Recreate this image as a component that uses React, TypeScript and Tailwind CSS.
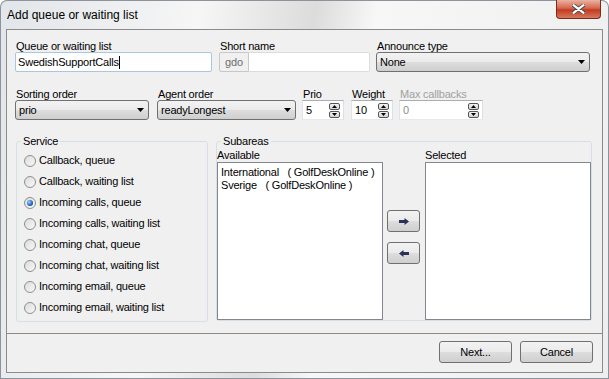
import React from "react";

const btnBg =
  "bg-[linear-gradient(#f2f2f2,#ebebeb_48%,#dddddd_52%,#cfcfcf)] border border-[#707070] rounded-[3px]";

const services = [
  "Callback, queue",
  "Callback, waiting list",
  "Incoming calls, queue",
  "Incoming calls, waiting list",
  "Incoming chat, queue",
  "Incoming chat, waiting list",
  "Incoming email, queue",
  "Incoming email, waiting list",
];

function Label({ children, muted }: { children: React.ReactNode; muted?: boolean }) {
  return (
    <div className={`h-[12px] leading-[12px] pl-[1px] whitespace-nowrap ${muted ? "text-[#a0a0a0]" : "text-black"}`}>
      {children}
    </div>
  );
}

function Combo({ value }: { value: string }) {
  return (
    <div className={`h-[20px] flex items-center pl-[3px] pr-[4px] ${btnBg}`}>
      <span className="flex-1">{value}</span>
      <svg width="7" height="4" viewBox="0 0 7 4">
        <path d="M0 0h7L3.5 4z" fill="#000" />
      </svg>
    </div>
  );
}

function SpinBtn({ up }: { up?: boolean }) {
  return (
    <div className="w-[11px] h-[7px] flex items-center justify-center rounded-[2px] border border-[#555] bg-[linear-gradient(#f4f4f4,#d4d4d4)]">
      <svg width="5" height="3" viewBox="0 0 5 3">
        <path d={up ? "M0 3h5L2.5 0z" : "M0 0h5L2.5 3z"} fill="#000" />
      </svg>
    </div>
  );
}

function Spinner({ value, muted }: { value: string; muted?: boolean }) {
  return (
    <div className="h-[20px] flex items-center pl-[3px] pr-[3px] bg-white border border-[#abadb3] border-l-[#e2e3ea] border-r-[#dbdfe6] border-b-[#e3e9ef]">
      <span className={`flex-1 ${muted ? "text-[#8d8d8d]" : "text-black"}`}>{value}</span>
      <div className="flex flex-col gap-[1px]">
        <SpinBtn up />
        <SpinBtn />
      </div>
    </div>
  );
}

function Radio({ checked }: { checked?: boolean }) {
  return (
    <div className="w-[12px] h-[12px] rounded-full border border-[#8e8f8f] bg-[linear-gradient(135deg,#dcdcdc,#f8f8f8)] flex items-center justify-center">
      {checked && (
        <div className="w-[6px] h-[6px] rounded-full bg-[radial-gradient(circle_at_35%_35%,#9fd3ff,#1d62b3_60%,#0b356f)]" />
      )}
    </div>
  );
}

function ArrowBtn({ left }: { left?: boolean }) {
  return (
    <div className={`w-[33px] h-[22px] flex items-center justify-center ${btnBg}`}>
      <svg width="10" height="7" viewBox="0 0 10 7">
        <path d={left ? "M0 3.5L4.5 0v2H10v3H4.5v2z" : "M10 3.5L5.5 0v2H0v3h5.5v2z"} fill="#2f2f5e" />
      </svg>
    </div>
  );
}

export default function App() {
  return (
    <div className="w-[609px] h-[379px] flex flex-col rounded-t-[7px] overflow-hidden text-[11px] tracking-[-0.2px] font-['Liberation_Sans',Arial,sans-serif] bg-[linear-gradient(100deg,#e2e5e9_0%,#f6f6f6_30%,#dcdcdc_47%,#f7f7f7_56%,#eeeeee_100%)] shadow-[inset_0_0_0_1px_#8d939a]">
      {/* title bar */}
      <div className="h-[29px] flex items-start">
        <div className="pl-[7px] pt-[9px] text-[12px] leading-[13px] tracking-normal text-black">
          Add queue or waiting list
        </div>
        <div className="ml-auto mr-[8px] w-[45px] h-[19px] flex items-center justify-center rounded-b-[4px] border border-t-0 border-[#7a2b1e] bg-[linear-gradient(#eab2a2,#d6674f_45%,#c23b1e_55%,#d77860)]">
          <svg width="13" height="10" viewBox="0 0 13 10">
            <path d="M1 1l11 8M12 1L1 9" stroke="#4a4a4a" strokeWidth="4" strokeLinecap="round" />
            <path d="M1.5 1.2l10 7.6M11.5 1.2l-10 7.6" stroke="#fff" strokeWidth="2.2" strokeLinecap="round" />
          </svg>
        </div>
      </div>

      {/* client area */}
      <div className="ml-[6px] w-[597px] h-[344px] flex flex-col border border-[#8b8b8b] bg-[#f0f0f0]">
        <div className="h-[303px] flex flex-col pl-[8px]">
          {/* row 1 */}
          <div className="flex mt-[10px]">
            <div className="w-[197px]">
              <Label>Queue or waiting list</Label>
              <div className="h-[20px] flex items-center pl-[2px] bg-white border border-[#a9c6e2] rounded-[2px]">
                SwedishSupportCalls
                <span className="w-px h-[13px] bg-black" />
              </div>
            </div>
            <div className="w-[151px] ml-[7px]">
              <Label>Short name</Label>
              <div className="h-[20px] flex">
                <div className="w-[30px] flex items-center justify-center border border-[#c8c8c8] rounded-l-[2px] text-[#6d6d6d]">
                  gdo
                </div>
                <div className="flex-1 bg-white border border-l-0 border-[#dcdcdc] rounded-r-[2px]" />
              </div>
            </div>
            <div className="w-[214px] ml-[6px]">
              <Label>Announce type</Label>
              <Combo value="None" />
            </div>
          </div>

          {/* row 2 */}
          <div className="flex mt-[16px]">
            <div className="w-[134px]">
              <Label>Sorting order</Label>
              <Combo value="prio" />
            </div>
            <div className="w-[139px] ml-[8px]">
              <Label>Agent order</Label>
              <Combo value="readyLongest" />
            </div>
            <div className="w-[42px] ml-[6px]">
              <Label>Prio</Label>
              <Spinner value="5" />
            </div>
            <div className="w-[42px] ml-[7px]">
              <Label>Weight</Label>
              <Spinner value="10" />
            </div>
            <div className="w-[84px] ml-[6px]">
              <Label muted>Max callbacks</Label>
              <Spinner value="0" muted />
            </div>
          </div>

          {/* group boxes */}
          <div className="flex mt-[15px]">
            <fieldset className="ml-[1px] w-[192px] h-[187px] border border-[#d5dfe5] rounded-[3px]">
              <legend className="ml-[4px] px-[2px] leading-[12px]">Service</legend>
              <div className="flex flex-col pt-[3px] pl-[7px]">
                {services.map((s, i) => (
                  <div key={s} className="h-[21px] flex items-center gap-[3px]">
                    <Radio checked={i === 2} />
                    <span>{s}</span>
                  </div>
                ))}
              </div>
            </fieldset>

            <fieldset className="ml-[8px] w-[376px] h-[186px] border border-[#d5dfe5] rounded-[3px]">
              <legend className="ml-[4px] px-[2px] leading-[12px]">Subareas</legend>
              <div className="flex pt-[2px]">
                <div className="w-[166px]">
                  <div className="h-[13px] leading-[13px]">Available</div>
                  <div className="h-[158px] bg-white border border-[#828790] pl-[3px] pt-[3px] leading-[13px]">
                    <div className="whitespace-pre">International   ( GolfDeskOnline )</div>
                    <div className="whitespace-pre">Sverige   ( GolfDeskOnline )</div>
                  </div>
                </div>
                <div className="w-[42px] flex flex-col pl-[4px] pt-[61px] gap-[10px]">
                  <ArrowBtn />
                  <ArrowBtn left />
                </div>
                <div className="w-[166px]">
                  <div className="h-[13px] leading-[13px]">Selected</div>
                  <div className="h-[158px] bg-white border border-[#828790]" />
                </div>
              </div>
            </fieldset>
          </div>
        </div>

        {/* buttons */}
        <div className="flex-1 border-t border-[#8b8b8b] flex justify-end items-start pt-[7px] pr-[9px] gap-[8px]">
          <div className={`w-[73px] h-[22px] flex items-center justify-center ${btnBg}`}>Next...</div>
          <div className={`w-[73px] h-[22px] flex items-center justify-center ${btnBg}`}>Cancel</div>
        </div>
      </div>
    </div>
  );
}
